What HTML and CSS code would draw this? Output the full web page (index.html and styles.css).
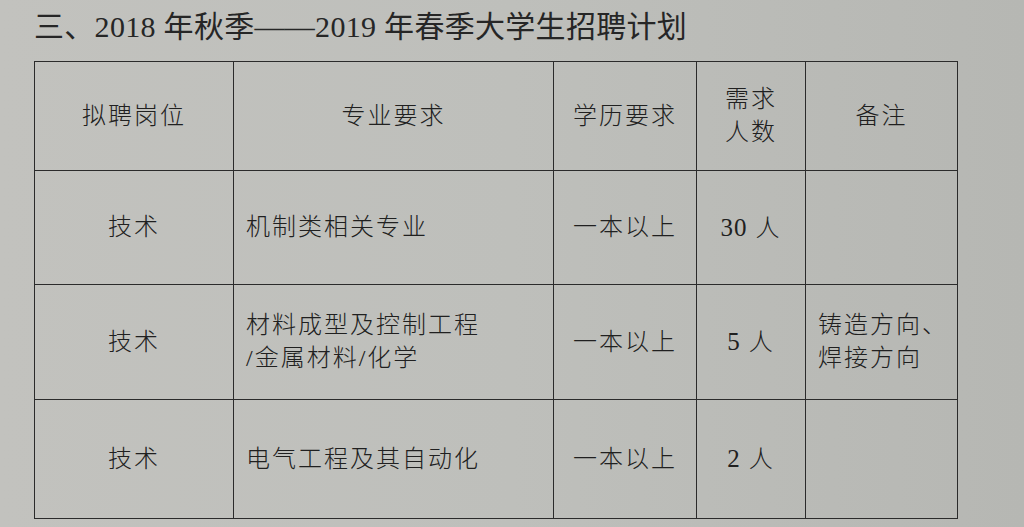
FILE: index.html
```html
<!DOCTYPE html>
<html lang="zh-CN">
<head>
<meta charset="utf-8">
<title>招聘计划</title>
<link rel="stylesheet" href="styles.css">
</head>
<body>
<div class="page">
  <h1 class="title">三、2018 年秋季——2019 年春季大学生招聘计划</h1>
  <table class="plan">
    <colgroup>
      <col class="c1"><col class="c2"><col class="c3"><col class="c4"><col class="c5">
    </colgroup>
    <tr class="r1">
      <td class="center">拟聘岗位</td>
      <td class="center">专业要求</td>
      <td class="center">学历要求</td>
      <td class="center two">需求<br>人数</td>
      <td class="center">备注</td>
    </tr>
    <tr class="r2">
      <td class="center">技术</td>
      <td class="left">机制类相关专业</td>
      <td class="center">一本以上</td>
      <td class="center"><span class="num">30</span> 人</td>
      <td></td>
    </tr>
    <tr class="r3">
      <td class="center">技术</td>
      <td class="left two">材料成型及控制工程<br>/金属材料/化学</td>
      <td class="center">一本以上</td>
      <td class="center"><span class="num">5</span> 人</td>
      <td class="left two">铸造方向、<br>焊接方向</td>
    </tr>
    <tr class="r4">
      <td class="center">技术</td>
      <td class="left">电气工程及其自动化</td>
      <td class="center">一本以上</td>
      <td class="center"><span class="num">2</span> 人</td>
      <td></td>
    </tr>
  </table>
</div>
</body>
</html>
```
FILE: styles.css
```css
html, body {
  margin: 0;
  padding: 0;
}
body {
  width: 1024px;
  height: 527px;
  overflow: hidden;
  background: linear-gradient(to right, #c2c2be 0%, #bebfbb 50%, #b6b7b3 100%);
  color: #262626;
  font-family: "Liberation Serif", "Noto Sans CJK SC", serif;
}
.page {
  padding: 8px 0 0 34px;
}
.title {
  margin: 0 0 16px 0;
  font-size: 30px;
  line-height: 37px;
  font-weight: 400;
  color: #262626;
  letter-spacing: 0.3px;
}
.plan {
  border-collapse: collapse;
  table-layout: fixed;
  width: 923px;
  font-family: "Liberation Serif", "Noto Sans CJK SC", sans-serif;
  font-weight: 300;
  font-size: 24px;
  letter-spacing: 2px;
  color: #202020;
}
.c1 { width: 199px; }
.c2 { width: 320px; }
.c3 { width: 143px; }
.c4 { width: 109px; }
.c5 { width: 152px; }
.plan td {
  border: 1.5px solid #2b2b2b;
  padding: 0;
  vertical-align: middle;
  line-height: 33px;
}
.r1 { height: 109px; }
.r2 { height: 114px; }
.r3 { height: 115px; }
.r4 { height: 119px; }
.center { text-align: center; }
.left { text-align: left; padding-left: 12px !important; }
.num {
  font-family: "Liberation Serif", serif;
  font-size: 25px;
  letter-spacing: 1px;
}
```
